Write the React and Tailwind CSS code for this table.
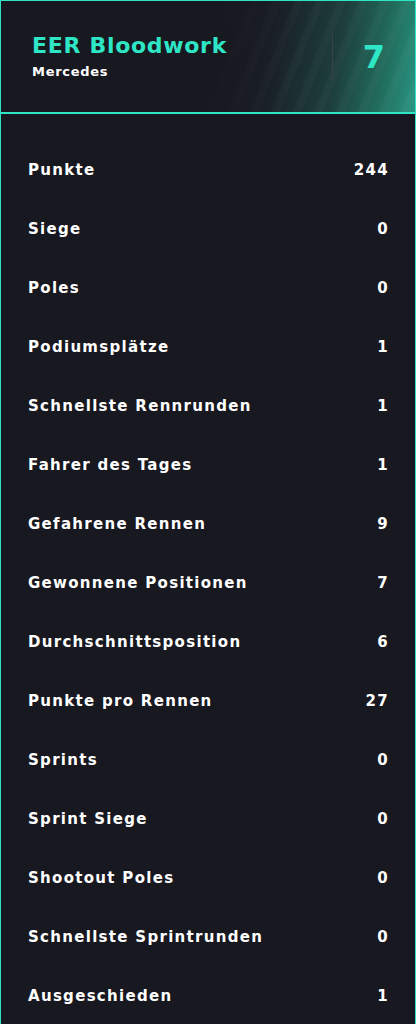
import React from "react";

const stats = [
  ["Punkte", "244"],
  ["Siege", "0"],
  ["Poles", "0"],
  ["Podiumsplätze", "1"],
  ["Schnellste Rennrunden", "1"],
  ["Fahrer des Tages", "1"],
  ["Gefahrene Rennen", "9"],
  ["Gewonnene Positionen", "7"],
  ["Durchschnittsposition", "6"],
  ["Punkte pro Rennen", "27"],
  ["Sprints", "0"],
  ["Sprint Siege", "0"],
  ["Shootout Poles", "0"],
  ["Schnellste Sprintrunden", "0"],
  ["Ausgeschieden", "1"],
];

export default function App() {
  return (
    <div
      className="w-[416px] min-h-[1024px] bg-[#181820] border border-b-0 border-[#2ee6c6] text-white"
      style={{ fontFamily: '"DejaVu Sans", "Noto Sans", sans-serif' }}
    >
      <div
        className="h-[113px] flex items-center pl-[31px] pr-0 border-b-2 border-[#2ee6c6]"
        style={{
          background:
            "linear-gradient(100deg, #181820 0%, #181820 50%, rgba(24,24,32,0) 70%), repeating-linear-gradient(112deg, rgba(255,255,255,0) 0px, rgba(255,255,255,0) 12px, rgba(255,255,255,0.025) 12px, rgba(255,255,255,0.025) 20px), linear-gradient(100deg, #181820 0%, #181820 52%, #1a2429 66%, #1d3e3c 80%, #22705f 92%, #2a9583 100%)",
        }}
      >
        <div className="flex-1 flex flex-col">
          <div className="text-[22px] leading-[26px] font-bold text-[#2ee6c6] tracking-[0.7px]">
            EER Bloodwork
          </div>
          <div className="text-[13px] leading-[16px] font-bold mt-[5px] tracking-[0.7px]">Mercedes</div>
        </div>
        <div className="w-px h-[46px] bg-[#3a4248]" />
        <div className="w-[82px] flex justify-center text-[32px] font-bold text-[#2ee6c6]">7</div>
      </div>
      <div className="pt-[27px] pl-[27px] pr-[26px]">
        {stats.map(([label, value]) => (
          <div
            key={label}
            className="h-[59px] flex items-center justify-between text-[15px] font-bold tracking-[1.3px]"
          >
            <span>{label}</span>
            <span>{value}</span>
          </div>
        ))}
      </div>
    </div>
  );
}
